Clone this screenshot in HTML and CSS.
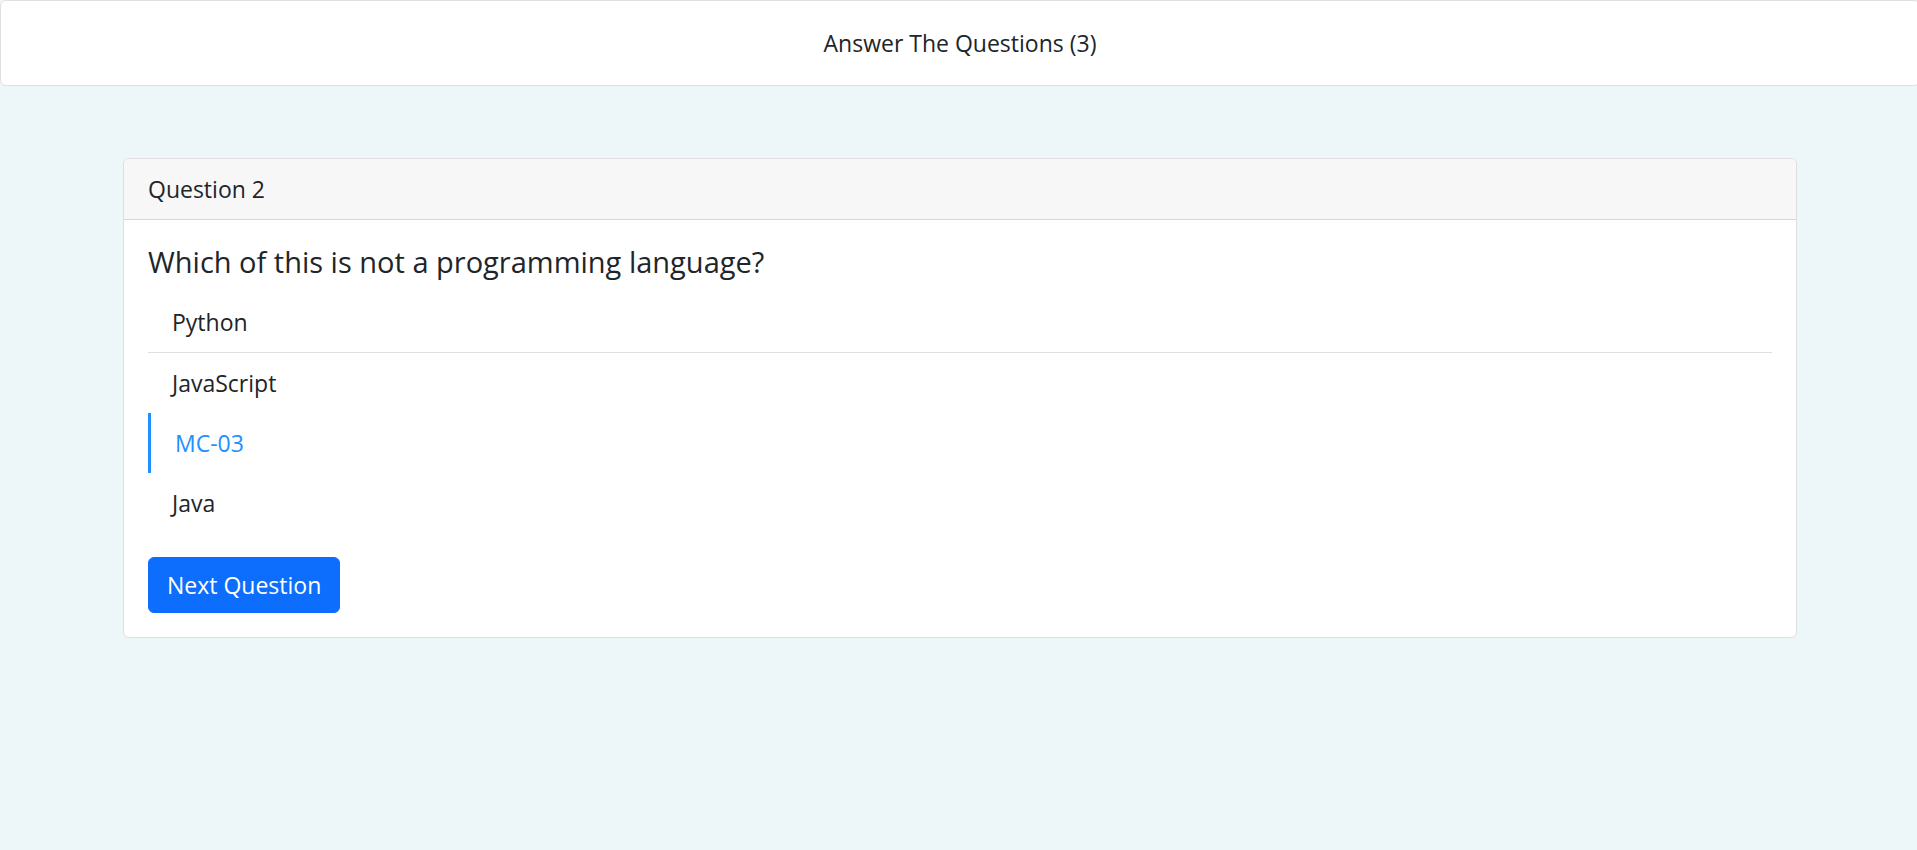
FILE: index.html
```html
<!DOCTYPE html>
<html lang="en">
<head>
<meta charset="utf-8">
<meta name="viewport" content="width=device-width, initial-scale=1">
<title>Answer The Questions</title>
<link rel="stylesheet" href="styles.css">
</head>
<body>
<div class="page">
  <header class="banner">
    <h1 class="banner-title">Answer The Questions (3)</h1>
  </header>
  <main class="quiz">
    <section class="card">
      <div class="card-header">Question 2</div>
      <div class="card-body">
        <h2 class="card-title">Which of this is not a programming language?</h2>
        <ul class="options">
          <li><button type="button" class="option option-divided">Python</button></li>
          <li><button type="button" class="option">JavaScript</button></li>
          <li><button type="button" class="option option-selected" aria-pressed="true">MC-03</button></li>
          <li><button type="button" class="option">Java</button></li>
        </ul>
        <button type="button" class="next">Next Question</button>
      </div>
    </section>
  </main>
</div>
</body>
</html>
```
FILE: styles.css
```css
* {
  box-sizing: border-box;
}

body {
  margin: 0;
  overflow-x: hidden;
  background: #edf6f9;
  color: #212529;
  font-family: "Segoe UI", "Open Sans", "Noto Sans", sans-serif;
  font-size: 23px;
  line-height: 36px;
}

.page {
  margin-right: -3px;
}

.banner {
  padding: 24px;
  border: 1px solid #dfdfdf;
  border-radius: 6px;
  background: #fff;
  text-align: center;
}

.banner-title {
  margin: 0;
  font-size: 23px;
  font-weight: 400;
}

.quiz {
  padding: 72px 123px;
}

.card {
  overflow: hidden;
  border: 1px solid #dfdfdf;
  border-radius: 6px;
  background: #fff;
}

.card-header {
  padding: 12px 24px;
  border-bottom: 1px solid #d8d8d8;
  background: #f7f7f7;
}

.card-body {
  padding: 24px;
}

.card-title {
  margin: 0 0 12px;
  font-size: 29px;
  font-weight: 400;
  line-height: 36px;
}

.options {
  margin: 0 0 24px;
  padding: 0;
  list-style: none;
}

.option {
  display: block;
  width: 100%;
  padding: 12px 24px;
  border: 0;
  background: none;
  color: inherit;
  font: inherit;
  text-align: left;
  cursor: pointer;
}

.option-divided {
  border-bottom: 1px solid #dfdfdf;
}

.option-selected {
  border-left: 3px solid #1e90ff;
  color: #1e90ff;
}

.next {
  display: block;
  padding: 9px 18px;
  border: 1px solid #0d6efd;
  border-radius: 6px;
  background: #0d6efd;
  color: #fff;
  font: inherit;
  cursor: pointer;
}
```
